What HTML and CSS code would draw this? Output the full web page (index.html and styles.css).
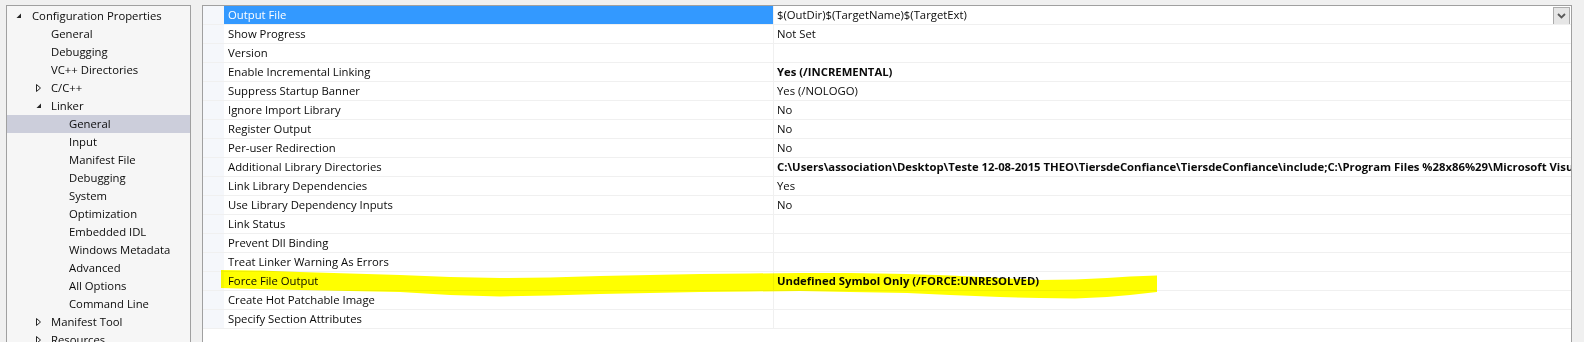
FILE: index.html
```html
<!DOCTYPE html>
<html>
<head>
<meta charset="utf-8">
<link rel="stylesheet" href="styles.css">
</head>
<body>
<div class="page">
  <div class="tree">
    <div class="node l0"><svg class="arrow" width="6" height="6" viewBox="0 0 6 6"><polygon points="5,0.5 5,5 0.5,5" fill="#262626"/></svg><span>Configuration Properties</span></div>
    <div class="node l1 leaf"><span>General</span></div>
    <div class="node l1 leaf"><span>Debugging</span></div>
    <div class="node l1 leaf"><span>VC++ Directories</span></div>
    <div class="node l1"><svg class="arrow" width="6" height="8" viewBox="0 0 6 8"><polygon points="0.5,0.5 4.5,4 0.5,7.5" fill="none" stroke="#262626" stroke-width="1"/></svg><span>C/C++</span></div>
    <div class="node l1"><svg class="arrow" width="6" height="6" viewBox="0 0 6 6"><polygon points="5,0.5 5,5 0.5,5" fill="#262626"/></svg><span>Linker</span></div>
    <div class="node l2 selected"><span>General</span></div>
    <div class="node l2"><span>Input</span></div>
    <div class="node l2"><span>Manifest File</span></div>
    <div class="node l2"><span>Debugging</span></div>
    <div class="node l2"><span>System</span></div>
    <div class="node l2"><span>Optimization</span></div>
    <div class="node l2"><span>Embedded IDL</span></div>
    <div class="node l2"><span>Windows Metadata</span></div>
    <div class="node l2"><span>Advanced</span></div>
    <div class="node l2"><span>All Options</span></div>
    <div class="node l2"><span>Command Line</span></div>
    <div class="node l1"><svg class="arrow" width="6" height="8" viewBox="0 0 6 8"><polygon points="0.5,0.5 4.5,4 0.5,7.5" fill="none" stroke="#262626" stroke-width="1"/></svg><span>Manifest Tool</span></div>
    <div class="node l1"><svg class="arrow" width="6" height="8" viewBox="0 0 6 8"><polygon points="0.5,0.5 4.5,4 0.5,7.5" fill="none" stroke="#262626" stroke-width="1"/></svg><span>Resources</span></div>
  </div>
  <div class="grid">
    <div class="row sel"><div class="margin"></div><div class="name">Output File</div><div class="value"><span class="txt">$(OutDir)$(TargetName)$(TargetExt)</span><span class="drop"><svg width="9" height="6" viewBox="0 0 9 6"><polyline points="1,1 4.5,4.5 8,1" fill="none" stroke="#5a5a5a" stroke-width="1.8"/></svg></span></div></div>
    <div class="row"><div class="margin"></div><div class="name">Show Progress</div><div class="value"><span class="txt">Not Set</span></div></div>
    <div class="row"><div class="margin"></div><div class="name">Version</div><div class="value"><span class="txt"></span></div></div>
    <div class="row"><div class="margin"></div><div class="name">Enable Incremental Linking</div><div class="value"><span class="txt b">Yes (/INCREMENTAL)</span></div></div>
    <div class="row"><div class="margin"></div><div class="name">Suppress Startup Banner</div><div class="value"><span class="txt">Yes (/NOLOGO)</span></div></div>
    <div class="row"><div class="margin"></div><div class="name">Ignore Import Library</div><div class="value"><span class="txt">No</span></div></div>
    <div class="row"><div class="margin"></div><div class="name">Register Output</div><div class="value"><span class="txt">No</span></div></div>
    <div class="row"><div class="margin"></div><div class="name">Per-user Redirection</div><div class="value"><span class="txt">No</span></div></div>
    <div class="row"><div class="margin"></div><div class="name">Additional Library Directories</div><div class="value"><span class="txt b">C:\Users\association\Desktop\Teste 12-08-2015 THEO\TiersdeConfiance\TiersdeConfiance\include;C:\Program Files %28x86%29\Microsoft Visual Studio 14.0\VC\lib;%(AdditionalLibraryDirectories)</span></div></div>
    <div class="row"><div class="margin"></div><div class="name">Link Library Dependencies</div><div class="value"><span class="txt">Yes</span></div></div>
    <div class="row"><div class="margin"></div><div class="name">Use Library Dependency Inputs</div><div class="value"><span class="txt">No</span></div></div>
    <div class="row"><div class="margin"></div><div class="name">Link Status</div><div class="value"><span class="txt"></span></div></div>
    <div class="row"><div class="margin"></div><div class="name">Prevent Dll Binding</div><div class="value"><span class="txt"></span></div></div>
    <div class="row"><div class="margin"></div><div class="name">Treat Linker Warning As Errors</div><div class="value"><span class="txt"></span></div></div>
    <div class="row"><div class="margin"></div><div class="name">Force File Output</div><div class="value"><span class="txt b">Undefined Symbol Only (/FORCE:UNRESOLVED)</span></div></div>
    <div class="row"><div class="margin"></div><div class="name">Create Hot Patchable Image</div><div class="value"><span class="txt"></span></div></div>
    <div class="row"><div class="margin"></div><div class="name">Specify Section Attributes</div><div class="value"><span class="txt"></span></div></div>
  </div>
  <svg class="marker" width="1584" height="342" viewBox="0 0 1584 342">
    <path d="M221,270 L260,270.5 L300,272 L350,273.5 L400,275 L450,277 L500,278 L550,277.5 L600,276 L650,275 L700,274 L750,273.5 L800,273 L850,273 L907,274 L950,275.5 L1000,278 L1040,280 L1075,279.5 L1107,278 L1130,276.5 L1157,275.5 L1157,292 L1130,295 L1107,297 L1075,298.5 L1040,298 L1000,297 L950,295 L907,293 L850,292 L800,291 L750,291.5 L700,292 L650,293 L600,294 L550,295.5 L500,296.5 L450,295 L400,292 L350,291 L300,290 L260,289 L221,288 Z" fill="#ffff00"/>
  </svg>
</div>
</body>
</html>
```
FILE: styles.css
```css
html, body {
  margin: 0;
  padding: 0;
  overflow: hidden;
}
body {
  background: #f0f0f0;
  width: 1584px;
  height: 342px;
  font-family: "Open Sans", "Noto Sans", sans-serif;
  font-size: 11.3px;
  color: #0a0a0a;
}
.page {
  position: relative;
  display: flex;
  align-items: flex-start;
  padding: 5px 0 0 6px;
  height: 337px;
  overflow: hidden;
}
.tree {
  width: 183px;
  height: 360px;
  flex: none;
  background: #f6f6f6;
  border: 1px solid #a0a0a0;
  padding-top: 1px;
  margin-right: 11px;
  box-sizing: content-box;
}
.node {
  height: 18px;
  line-height: 18px;
  display: flex;
  align-items: center;
  white-space: nowrap;
  position: relative;
}
.node span {
  display: block;
}
.node.l0 { padding-left: 25px; }
.node.l1 { padding-left: 44px; }
.node.l2 { padding-left: 62px; }
.node .arrow {
  position: absolute;
  top: 50%;
  transform: translateY(-50%);
}
.node.l0 .arrow { left: 9px; }
.node.l1 .arrow { left: 29px; }
.node.selected {
  background: #cccedb;
}
.grid {
  width: 1368px;
  height: 360px;
  flex: none;
  background: #ffffff;
  border: 1px solid #a0a0a0;
}
.row {
  display: flex;
  height: 18px;
  border-bottom: 1px solid #f0f0f0;
}
.margin {
  width: 21px;
  flex: none;
  background: #f5f7fb;
}
.name {
  width: 545px;
  flex: none;
  padding-left: 4px;
  line-height: 18px;
  border-right: 1px solid #f0f0f0;
  white-space: nowrap;
  overflow: hidden;
}
.row.sel .name {
  background: #3399ff;
  color: #ffffff;
}
.value {
  flex: 1;
  min-width: 0;
  display: flex;
  align-items: flex-start;
  justify-content: space-between;
  padding-left: 3px;
  line-height: 18px;
  overflow: hidden;
}
.txt {
  white-space: nowrap;
  overflow: hidden;
}
.txt.b {
  font-weight: 700;
}
.drop {
  flex: none;
  width: 15px;
  height: 16px;
  margin: 1px 1px 0 0;
  border: 1px solid #acacac;
  background: #e6e6e6;
  display: flex;
  align-items: center;
  justify-content: center;
}
.marker {
  position: absolute;
  left: 0;
  top: 0;
  pointer-events: none;
  mix-blend-mode: multiply;
}
```
